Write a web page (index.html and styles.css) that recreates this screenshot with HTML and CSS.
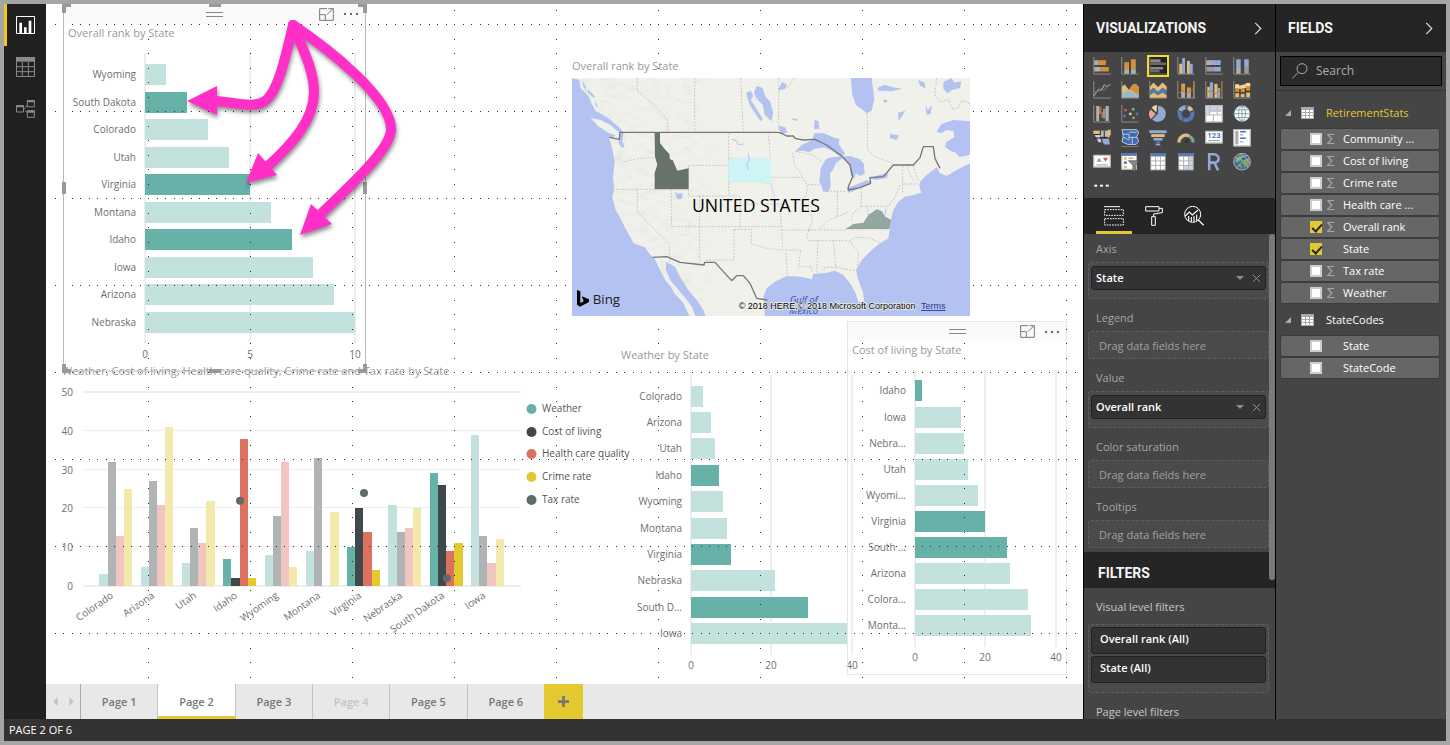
FILE: index.html
```html
<!DOCTYPE html>
<html lang="en">
<head>
<meta charset="utf-8">
<title>Retirement report</title>
<link rel="stylesheet" href="styles.css">
</head>
<body>
<div class="app">
  <div class="body">
    <nav class="rail" aria-label="Views">
      <button class="rail-btn active" aria-label="Report"><svg viewBox="0 0 57 54" width="19" height="18"><path d="M1.5 1.5h54v51h-54z" fill="none" stroke="#fff" stroke-width="3"/><path d="M10 20h8v34h-8zM24 34h8v20h-8zM38 14h8v40h-8z" fill="#fff"/></svg></button>
      <button class="rail-btn" aria-label="Data"><svg viewBox="0 0 57 60" width="19" height="20"><path d="M0 0h57v14H0z" fill="#8a8a8a"/><path d="M1.5 1.5h54v57h-54zM1.5 29h54M1.5 44h54M19 14v45M37 14v45" fill="none" stroke="#8a8a8a" stroke-width="3"/></svg></button>
      <button class="rail-btn" aria-label="Relationships"><svg viewBox="0 0 57 54" width="19" height="18"><path d="M1.500 17h21v19h-21zM34 1.500h21v19H34zM34 32h21v20H34zM23 26h4M27 22l7-6M27 32l7 6" fill="none" stroke="#8a8a8a" stroke-width="3"/><path d="M1 16h22v6H1zM33 1h22v6H33zM33 32h22v6H33z" fill="#8a8a8a"/></svg></button>
    </nav>

    <main class="workspace">
      <div class="canvas">
        <section class="visual rank selected">
          <h2 class="title">Overall rank by State</h2>
          <svg class="chart" id="rank" viewBox="64 46 302 325" width="302" height="325"></svg>
        </section>
        <section class="visual combo">
          <h2 class="title">Weather, Cost of living, Health care quality, Crime rate and Tax rate by State</h2>
          <svg class="chart" id="combo" viewBox="58 380 590 260" width="590" height="260"></svg>
        </section>
        <section class="visual weather">
          <h2 class="title">Weather by State</h2>
          <svg class="chart" id="weather" viewBox="617 370 246 306" width="246" height="306"></svg>
        </section>
        <section class="visual cost">
          <h2 class="title">Cost of living by State</h2>
          <svg class="chart" id="cost" viewBox="848 362 218 308" width="218" height="308"></svg>
        </section>
        <svg class="dots" id="dots" viewBox="46 4 1037 680" width="1037" height="680" aria-hidden="true"></svg>

        <section class="visual map">
          <h2 class="title">Overall rank by State</h2>
          <svg class="map-svg" viewBox="36 84 1194 714" width="398" height="238" role="img" aria-label="Map of the United States">
            <defs>
              <filter id="relief" x="0" y="0" width="1" height="1"><feTurbulence type="fractalNoise" baseFrequency=".03 .06" numOctaves="4" seed="4"/><feColorMatrix values="0 0 0 0 .6  0 0 0 0 .6  0 0 0 0 .56  1.600 0 0 0 -.72"/></filter>
              <linearGradient id="fade"><stop offset="0" stop-color="#fff"/><stop offset=".7" stop-color="#fff"/><stop offset="1" stop-color="#000"/></linearGradient>
              <mask id="west"><rect x="36" y="84" width="500" height="714" fill="url(#fade)"/></mask>
            </defs>
            <path d="M36 84h1194v714H36z" fill="#f1f1ec"/>
            <path d="M36 84h500v714H36z" filter="url(#relief)" mask="url(#west)" opacity=".32"/>
            <g class="states">
              <path d="M232 84v40l18 14 20 16 25 25 25 28 6 40M404 84v163M542 84l8 163M656 84v160M704 84l-20 26-28 14M922 190v108l20 20 50 20 12 8M1130 84l-6 50 18 22 24 -8 12 30 18-6 10-22 34 16M166 322l22 14 46-10 50-4M158 418h126M232 418v68l96 98 2 50M334 418v112M334 530h330M418 438v192M386 346h120M506 248v190M386 438h120M386 418v20M386 355v-9M506 395h94l34 8M506 438h34v90M540 462h128M506 325h122M624 248l8 77M634 382h92M634 403l14 60 12 12 4 54 4 64M726 382l16 22 -2 28-14 18 16 18 16 44-10 24-10 36M664 540h96M668 600h54M522 538v92h-86M522 538h52v44l50 14 44 4M678 608l4 70M722 600l-6 50h38l2 16M774 572l-4 100M820 572l8 80h-36v14M745 572h120M868 572l28 36-4 50M828 652l56 10M742 540h116M858 537h130M868 572l20-10 40 2 40 18M776 540l30-30 30-12 32-14M832 424v76M742 404h38M790 424h72M904 415v54h80l18-24M904 469l-24 20-6 22M920 470l6 26M1028 348v52M1040 350l20 40M1060 347l14 44M1030 402h48M1028 402v30M1002 448l20 -46M698 308l6 40 20 22 2 12M706 304l50 10 28 20"/>
            </g>
            <g class="water">
              <path d="M36 84l22 6 4 25 23 22 10 24 12 22 22 12 26 18 24 20 12 16-4 24-10-5 2-22-22 18-9 0 10 38 6 34-5 46 3 38-5 22 10 38 17 30 20 40 17 30 33 12 15 20 15 14 15 32 18 34 17 20 10 20 25 25 20 43H36z"/>
              <path d="M66 92l10 14 4 16-10-12zM84 118l22 22-4 4-18-16zM104 150l10 20-6 0z"/>
              <path d="M318 635l27 15 15 30 25 40 25 30 20 30 6 18h-30l-10-28-20-25-20-25-26-30-12-30z"/>
              <path d="M1230 340l-45 20-25 18-20-8-10-18-30 23-20 20-2 15 6 18-24 7-25 5-20 15-15 25-6 24-2 16-4 25-3 20-25 15-25 20-30 30-17 30 7 30 15 40 2 30-17-5-10-30-15-25-20-25-25-13-25 6-40 4-5 16-30-8-45-2-35 17-25 20-10 25 5 58h615z"/>
              <path d="M1230 214l-50-4-35 12-16 24 16 4 14-10 22 4 2 18-24 14-4 14 16 12 16 6 12 14 31-8z"/>
              <path d="M873 84h62l3 26 5 36-8 36-15 8-16-14-16-10-12-34z"/>
              <path d="M590 108l18 6 8 26 14 14 10 36-6 24-20-20-6-30-20-20-6-18zM558 128l14-6 8 16-8 12 14 20 22 36-6 8-20-28-14-24z"/>
              <path d="M704 306l20-20 32-16 8-20h28l24 10 22 8-2 14 20 30-14 8-26-18-24-10-26 4-18 10-24-4z"/>
              <path d="M790 425l-12-32 4-38 14-26 10-6 38-4 4 6-20 14-8 18-10 14 2 36-6 18zM840 320l30-2 30 10 12 14 2 30-16 6-10-8-6 16-10-10-4-36-14-12z"/>
              <path d="M860 415l26-10 34-14 14 4-20 14-48 20zM928 384l32-10 26-4-6 14-36 6zM764 210l12 4 2 24-16-2zM656 228l20 4 6 16-20 4zM692 206l20 0-2 8zM952 114l22-10 24 8 28 4-30 8-40-2zM1014 188l22-6-12 20-8 12zM1096 164l8 16 12-14-4 26-12 2zM990 252l26 4-6 14-20-6zM1074 90l20 8 2 18-16-10zM1150 96l24-12 10 14 20-4-4 20-24 6-14 10-12-14zM970 148l14 4-10 8zM344 424l10 8 14-4-2 18-14 2zM176 262l8 8 10 20-8 4-10-14zM654 120l12-24 16 8-8 14zM90 196l16-4 30 8 20 14-30-4z"/>
            </g>
            <path class="land" d="M92 204l30 6 30 16 26 22-4 10-30-10-30-20z"/>
            <path class="land" d="M1140 364l24-16 30-14 36-6v10l-40 22-24 14-20-4zM1060 428l20-4-28 12-24 4zM984 476l8 0 4 18-8-4z"/>
            <path class="stream" d="M515 268l14 4 6 12 16-2M978 476l-4 24 14 8"/>
            <path fill="#66726a" d="M284 247h16v32l12 16 16 17 2 16 8 2 14 32 34-7v63H284v-50l8-24-7-24z"/>
            <path fill="#cdf5f5" d="M506 325h122l6 20v58l-30-8h-98z"/>
            <path class="stream" d="M564 310l4 20-8 14 6 16"/>
            <path fill="#93a7a1" d="M857 537l23-15 30-4 15-23 25-17 15 5 10 17 19 10-6 27z"/>
            <g class="border">
              <path d="M148 262l30 6 2-21h475l10 3 15 8h20l5 7 25 5 35-2 35 17 45 33 25 27 8 35-13 30v10l35-7 32-13-2-17 40-3 30-35h60l20-22 10-33h30l5 35 15 30"/>
              <path d="M278 622l42-2 40 17 72 8 2-8h31l25 28 25 27 15-15h20l20 23 20 45 32 5"/>
            </g>
            <g class="map-text">
              <text x="396" y="486" class="country">UNITED STATES</text>
              <text x="690" y="758" class="gulf">Gulf of</text>
              <text x="688" y="793" class="gulf">Mexico</text>
              <text x="98" y="761" class="bing">Bing</text>
              <text x="536" y="777" class="legal">© 2018 HERE,© 2018 Microsoft Corporation</text>
            </g>
            <path d="M51 720l10 4v36l10-7-6-14 22 9v8l-27 14-9-6z"/>
            <a href="#terms"><text x="1083" y="777" class="terms">Terms</text></a>
          </svg>
        </section>

        <div class="visual-head rank-head">
          <span class="grip"></span>
          <button aria-label="Focus mode"><svg viewBox="0 0 45 39" width="15" height="13"><path d="M24 2H2v35h41V16M2 20h17v17M24 20L42 2M28 2h15v13" fill="none" stroke="#777" stroke-width="3"/></svg></button>
          <button aria-label="More options"><svg viewBox="0 0 48 12" width="16" height="4"><path d="M3 3h6v6H3zM21 3h6v6h-6zM39 3h6v6h-6z" fill="#666"/></svg></button>
        </div>
        <div class="visual-head cost-head">
          <span class="grip"></span>
          <button aria-label="Focus mode"><svg viewBox="0 0 45 39" width="15" height="13"><path d="M24 2H2v35h41V16M2 20h17v17M24 20L42 2M28 2h15v13" fill="none" stroke="#777" stroke-width="3"/></svg></button>
          <button aria-label="More options"><svg viewBox="0 0 48 12" width="16" height="4"><path d="M3 3h6v6H3zM21 3h6v6h-6zM39 3h6v6h-6z" fill="#666"/></svg></button>
        </div>

        <svg class="overlay" viewBox="46 4 420 380" width="420" height="380" aria-hidden="true">
          <path d="M63.500 4v367h302V4" fill="none" stroke="#b8b8b8"/>
          <path d="M62 4h9v3h-5v6h-4zM358 4h9v9h-4V7h-5zM209 4h12v3h-12zM62 182h4v12h-4zM363 182h4v12h-4zM62 364h4v5h5v4h-9zM363 364h4v9h-9v-4h5zM209 369h12v4h-12z" fill="#999"/>
          <g class="arrows">
            <path d="M293 25C285 60 277 95 263 102C252 108 234 102 215 101"/>
            <path d="M293 25C303 50 314 70 314 92C314 120 292 144 268 166"/>
            <path d="M293 25C330 50 391 98 391 129C391 150 346 189 320 215"/>
            <path class="head" d="M187 101l30-15v29zM246 183l12-30 19 22zM300 235l11-31 21 20z"/>
          </g>
        </svg>
      </div>

      <div class="pages">
        <div class="page-nav">
          <button aria-label="Previous page"><svg viewBox="0 0 5 10" width="5" height="9"><path d="M5 0v10L0 5z" fill="#c4c4c4"/></svg></button>
          <button aria-label="Next page"><svg viewBox="0 0 5 10" width="5" height="9"><path d="M0 0v10l5-5z" fill="#c4c4c4"/></svg></button>
        </div>
        <div class="page-list">
          <button>Page 1</button><button class="current">Page 2</button><button>Page 3</button><button class="hidden-page">Page 4</button><button>Page 5</button><button>Page 6</button>
        </div>
        <button class="add-page" aria-label="Add page"><svg viewBox="0 0 12 12" width="11" height="11"><path d="M4.500 0h3v4.500H12v3H7.500V12h-3V7.500H0v-3h4.500z" fill="#777"/></svg></button>
      </div>
    </main>

    <aside class="pane viz">
      <header class="pane-head"><h1>VISUALIZATIONS</h1><button aria-label="Collapse"><svg viewBox="0 0 8 14" width="8" height="13"><path d="M1 1l6 6-6 6" fill="none" stroke="#ddd" stroke-width="1.300"/></svg></button></header>
      <div class="viz-grid" id="viz-grid"></div>
      <div class="viz-tabs">
        <button class="on" aria-label="Fields"><svg viewBox="0 0 60 60" width="20" height="20"><path d="M0 2h48" stroke="#fff" stroke-width="3"/><path d="M2 11h56v17H2zM2 38h56v19H2z" fill="none" stroke="#fff" stroke-width="3" stroke-dasharray="5 3"/></svg></button>
        <button aria-label="Format"><svg viewBox="0 0 54 60" width="18" height="20"><path d="M2 2h40v13H2zM42 7h10v13L26 24v8M20 32h11v26H20z" fill="none" stroke="#fff" stroke-width="3"/></svg></button>
        <button aria-label="Analytics"><svg viewBox="0 0 60 60" width="20" height="20"><circle cx="26" cy="25" r="24" fill="none" stroke="#fff" stroke-width="3"/><path d="M43 42l16 16M4 30l12-12 9 9 17-15M14 30v15M22 33v15M30 31v17M38 26v18" fill="none" stroke="#fff" stroke-width="3.500"/></svg></button>
      </div>
      <div class="wells">
        <h3>Axis</h3>
        <div class="well"><div class="chip"><span>State</span><button class="caret" aria-label="Options for State"></button><button aria-label="Remove State"><svg viewBox="0 0 10 10" width="9" height="9"><path d="M1 1l8 8M9 1L1 9" stroke="#999" fill="none"/></svg></button></div></div>
        <h3>Legend</h3>
        <div class="well empty">Drag data fields here</div>
        <h3>Value</h3>
        <div class="well"><div class="chip"><span>Overall rank</span><button class="caret" aria-label="Options for Overall rank"></button><button aria-label="Remove Overall rank"><svg viewBox="0 0 10 10" width="9" height="9"><path d="M1 1l8 8M9 1L1 9" stroke="#999" fill="none"/></svg></button></div></div>
        <h3>Color saturation</h3>
        <div class="well empty">Drag data fields here</div>
        <h3>Tooltips</h3>
        <div class="well empty">Drag data fields here</div>
      </div>
      <h1 class="filters-head">FILTERS</h1>
      <div class="filters">
        <h3>Visual level filters</h3>
        <div class="well group"><button>Overall rank (All)</button><button>State (All)</button></div>
        <h3>Page level filters</h3>
      </div>
      <span class="scrollbar"></span>
    </aside>

    <aside class="pane fields">
      <header class="pane-head"><h1>FIELDS</h1><button aria-label="Collapse"><svg viewBox="0 0 8 14" width="8" height="13"><path d="M1 1l6 6-6 6" fill="none" stroke="#ddd" stroke-width="1.300"/></svg></button></header>
      <div class="search-wrap"><label class="search"><svg viewBox="0 0 48 48" width="16" height="16"><circle cx="30" cy="17" r="15" fill="none" stroke="#aaa" stroke-width="3"/><path d="M19 28L1 46" stroke="#aaa" stroke-width="3"/></svg><input type="text" placeholder="Search" aria-label="Search"></label></div>
      <div class="tree">
        <div class="table-name active"><i class="twisty"></i><svg viewBox="0 0 13 12" width="13" height="12"><path d="M0 0h13v12H0z" fill="#aaa"/><path d="M1 3h3v2H1zM5 3h3v2H5zM9 3h3v2H9zM1 6h3v2H1zM5 6h3v2H5zM9 6h3v2H9zM1 9h3v2H1zM5 9h3v2H5zM9 9h3v2H9z" fill="#fff"/></svg><span>RetirementStats</span></div>
        <label class="field"><input type="checkbox"><i>∑</i><span>Community ...</span></label>
        <label class="field"><input type="checkbox"><i>∑</i><span>Cost of living</span></label>
        <label class="field"><input type="checkbox"><i>∑</i><span>Crime rate</span></label>
        <label class="field"><input type="checkbox"><i>∑</i><span>Health care ...</span></label>
        <label class="field"><input type="checkbox" checked><i>∑</i><span>Overall rank</span></label>
        <label class="field"><input type="checkbox" checked><i></i><span>State</span></label>
        <label class="field"><input type="checkbox"><i>∑</i><span>Tax rate</span></label>
        <label class="field"><input type="checkbox"><i>∑</i><span>Weather</span></label>
        <div class="table-name"><i class="twisty"></i><svg viewBox="0 0 13 12" width="13" height="12"><path d="M0 0h13v12H0z" fill="#aaa"/><path d="M1 3h3v2H1zM5 3h3v2H5zM9 3h3v2H9zM1 6h3v2H1zM5 6h3v2H5zM9 6h3v2H9zM1 9h3v2H1zM5 9h3v2H5zM9 9h3v2H9z" fill="#fff"/></svg><span>StateCodes</span></div>
        <label class="field"><input type="checkbox"><i></i><span>State</span></label>
        <label class="field"><input type="checkbox"><i></i><span>StateCode</span></label>
      </div>
    </aside>
  </div>
  <footer class="status">PAGE 2 OF 6</footer>
</div>
<script src="charts.js"></script>
</body>
</html>
```
FILE: styles.css
```css
* { box-sizing: border-box; }
body {
  margin: 0;
  font: 11px/16px "Open Sans", "Noto Sans", sans-serif;
  color: #fff;
}
h1, h2, h3 { margin: 0; font-size: 11px; font-weight: 400; }
button { border: 0; padding: 0; background: none; font: inherit; color: inherit; cursor: pointer; }
svg { display: block; }

.app {
  display: flex;
  flex-direction: column;
  height: 100vh;
  border: 4px solid #a5a5a5;
  background: #333;
}
.body { display: flex; flex: 1; min-height: 0; }
.status { height: 22px; padding-left: 5px; line-height: 22px; background: #333; }

.rail { display: flex; flex-direction: column; width: 42px; background: #212121; }
.rail-btn { display: grid; place-items: center; width: 42px; height: 42px; }
.rail-btn.active { border-left: 3px solid #f2c811; padding-right: 3px; }

.workspace { display: flex; flex-direction: column; flex: 1; min-width: 0; background: #fff; }
.canvas { position: relative; flex: 1; min-height: 0; overflow: hidden; }
.visual { position: absolute; }
.title { line-height: 16px; color: #999; white-space: nowrap; }
.chart text { font-size: 10px; fill: #6e6e6e; }
.chart { overflow: visible; }
.rank { left: 18px; top: 21px; }
.rank .title { padding-left: 4px; margin-bottom: 5px; }
.combo { left: 12px; top: 359px; }
.combo .title { padding-left: 4px; margin-bottom: 1px; }
.weather { left: 571px; top: 343px; }
.weather .title { padding-left: 4px; margin-bottom: 7px; }
.cost { left: 801px; top: 317px; width: 220px; height: 354px; padding-top: 20px; border: 1px solid #e6e6e6; }
.cost .title { padding-left: 4px; margin-bottom: 4px; }
.map { left: 526px; top: 54px; }
.map .title { margin-bottom: 4px; }
.chart .rule { fill: #eee; }
.chart .legend { fill: #555; }
.dots { position: absolute; left: 0; top: 0; pointer-events: none; fill: #2a2a2a; }
.overlay { position: absolute; left: 0; top: 0; pointer-events: none; }
.arrows { fill: none; stroke: #ff2fc8; stroke-width: 10; stroke-linecap: round; filter: drop-shadow(1px 3px 2px rgba(0, 0, 0, .45)); }
.arrows .head { fill: #ff2fc8; stroke: none; }

.visual-head {
  position: absolute;
  display: grid;
  grid-template-columns: 1fr auto 1fr auto auto;
  align-items: center;
  height: 20px;
  background: #fafafa;
}
.visual-head .grip { grid-column: 2; width: 17px; height: 5px; margin-left: 46px; border: solid #888; border-width: 1px 0; }
.visual-head button:nth-of-type(1) { grid-column: 4; padding-right: 9px; }
.visual-head button:nth-of-type(2) { grid-column: 5; padding-right: 6px; }
.rank-head { left: 18px; top: 0; width: 301px; }
.cost-head { left: 802px; top: 318px; width: 218px; height: 19px; }

.states { fill: none; stroke: #b9b5aa; stroke-width: 2; stroke-dasharray: 6 4; }
.water { fill: #b3c2f0; }
.land { fill: #f1f1ec; }
.stream { fill: none; stroke: #b3c2f0; stroke-width: 3; }
.border { fill: none; stroke: #777; stroke-width: 4; stroke-linejoin: round; }
.map-text { fill: #000; paint-order: stroke; }
.country { font: 53px "Open Sans", "Noto Sans", sans-serif; stroke: #f1f1ec; stroke-width: 6; }
.bing { font: 40px "Open Sans", "Noto Sans", sans-serif; fill: #222; }
.gulf { font: italic 28px "Open Sans", "Noto Sans", sans-serif; fill: #3d4fae; }
.legal { font: 27px "Liberation Sans", Arial, sans-serif; stroke: #f1f1ec; stroke-width: 4; }
.terms { font: 27px "Liberation Sans", Arial, sans-serif; fill: #2b35a0; text-decoration: underline; }

.pages { display: flex; height: 35px; background: #e8e8e8; color: #777; }
.page-nav { display: flex; justify-content: center; align-items: center; gap: 11px; width: 34px; }
.page-list { display: flex; width: 464px; border-left: 1px solid #aaa; }
.page-list button { flex: 1; border-right: 1px solid #c4c4c4; font-weight: 600; }
.page-list .current { background: #fff; border-bottom: 3px solid #e3c92f; padding-top: 3px; }
.page-list .hidden-page { color: #c4c4c4; }
.page-list button:last-child { border-right: 0; }
.add-page { display: grid; place-items: center; width: 39px; background: #e3c92f; }

.pane { position: relative; border-left: 1px solid #000; background: #454545; overflow: hidden; }
.viz { width: 192px; }
.fields { width: 171px; }
.pane-head { display: flex; justify-content: space-between; align-items: center; height: 48px; padding: 0 13px 0 12px; background: #252525; }
.pane-head h1, .filters-head { font: 700 14px/20px Roboto, "Open Sans", sans-serif; color: #f4f4f4; }
.viz-grid { display: grid; grid-template-columns: repeat(6, 28px); grid-auto-rows: 24px; padding: 2px 0 0 4px; height: 146px; }
.viz-grid button { display: grid; place-items: center; }
.viz-grid .picked svg { box-sizing: content-box; border: 2px solid #f2d92f; background: #222; }
.viz-tabs { display: flex; height: 36px; padding-left: 12px; background: #252525; gap: 4px; }
.viz-tabs button { display: grid; place-items: center; width: 36px; }
.viz-tabs .on { border-bottom: 3px solid #e3c92f; padding-top: 3px; }
.viz h3 { height: 32px; padding-left: 12px; line-height: 38px; color: #a6a6a6; }
.viz .wells { padding-bottom: 4px; }
.viz .wells h3:first-child { height: 28px; line-height: 30px; }
.well { width: 181px; height: 37px; margin-left: 4px; padding: 3px 2px; border: 1px dashed #5e5e5e; border-radius: 3px; background: #4a4a4a; }
.well.empty { height: 28px; padding: 0 10px; line-height: 28px; color: #a0a0a0; }
.chip { display: flex; align-items: center; height: 24px; padding: 0 4px; border: 1px solid #222; border-radius: 3px; background: #333; font-weight: 600; }
.chip span { flex: 1; }
.chip button { margin-left: 8px; }
.chip .caret { border: solid transparent; border-width: 4px 4px 0; border-top-color: #8d8d8d; margin: 0; }
.filters-head { padding-left: 14px; height: 36px; line-height: 42px; background: #252525; }
.viz .filters h3 { height: 36px; color: #c8c8c8; }
.well.group { display: grid; gap: 2px; height: 69px; padding: 2px; align-content: start; }
.group button { height: 27px; padding: 0 8px 3px; text-align: left; border: 1px solid #222; border-radius: 3px; background: #333; font-weight: 600; }
.scrollbar { position: absolute; right: 0; top: 230px; width: 6px; height: 346px; border-radius: 3px; background: #7a7a7a; }

.search-wrap { padding: 4px; height: 39px; border-bottom: 1px solid #333; }
.search { display: flex; align-items: center; height: 30px; padding-left: 11px; gap: 8px; border: 1px solid #000; background: #2a2a2a; }
.search input { flex: 1; width: 0; padding: 0; border: 0; outline: 0; background: none; color: #fff; font: 12px/16px "Open Sans", "Noto Sans", sans-serif; }
.search input::placeholder { color: #aaa; }
.tree { padding: 6px 6px 0 4px; }
.table-name { display: flex; align-items: center; height: 31px; padding-left: 5px; }
.table-name.active { color: #e3c92f; }
.table-name svg { margin: 0 12px 0 10px; }
.twisty { border: solid transparent; border-width: 0 0 6px 6px; border-bottom-color: #aaa; }
.field { display: flex; align-items: center; height: 22px; padding-left: 29px; border: 1px solid #3c3c3c; border-radius: 3px; background: #666; white-space: nowrap; }
.field input { appearance: none; width: 12px; height: 12px; margin: 0; border: 2px solid #ccc; background: #fff; }
.field input:checked { position: relative; border: 0; background: #e3c92f; }
.field input:checked::after { content: ""; position: absolute; left: 4px; top: 1px; width: 4px; height: 8px; border: solid #222; border-width: 0 2px 2px 0; transform: rotate(42deg); }
.field i { width: 21px; padding-left: 5px; font: 11px/14px "DejaVu Sans", sans-serif; color: #aaa; }
```
FILE: charts.js
```js
const NS = 'http://www.w3.org/2000/svg';
const LIGHT = '#c4e2dd', DARK = '#67b2a8';
function add(parent, name, attrs, text) {
  const node = document.createElementNS(NS, name);
  for (const key in attrs) node.setAttribute(key, attrs[key]);
  if (text !== undefined) node.textContent = text;
  parent.appendChild(node);
  return node;
}
function bars(id, o) {
  const svg = document.getElementById(id);
  o.ticks.forEach(t => {
    const x = Math.round(o.x + t * o.unit);
    add(svg, 'rect', { x: x - 1, y: o.top, width: 2, height: o.bottom - o.top, class: 'rule' });
    add(svg, 'text', { x, y: o.bottom + 14, 'text-anchor': 'middle' }, t);
  });
  o.rows.forEach(([name, value, on], i) => {
    const y = Math.round(o.first + i * o.step);
    add(svg, 'rect', { x: o.x, y, width: Math.round(value * o.unit), height: 21, fill: on ? DARK : LIGHT });
    add(svg, 'text', { x: o.x - 9, y: y + 14, 'text-anchor': 'end' }, name);
  });
}
bars('rank', { x: 145, unit: 21, top: 53, bottom: 344, first: 64, step: 27.5, ticks: [0, 5, 10], rows: [
  ['Wyoming', 1], ['South Dakota', 2, 1], ['Colorado', 3], ['Utah', 4], ['Virginia', 5, 1],
  ['Montana', 6], ['Idaho', 7, 1], ['Iowa', 8], ['Arizona', 9], ['Nebraska', 10]] });
bars('weather', { x: 691, unit: 4.02, top: 375, bottom: 655, first: 385.5, step: 26.4, ticks: [0, 20, 40], rows: [
  ['Colorado', 3], ['Arizona', 5], ['Utah', 6], ['Idaho', 7, 1], ['Wyoming', 8],
  ['Montana', 9], ['Virginia', 10, 1], ['Nebraska', 21], ['South D...', 29, 1], ['Iowa', 39]] });
bars('cost', { x: 915, unit: 3.52, top: 370, bottom: 647, first: 380.4, step: 26.1, ticks: [0, 20, 40], rows: [
  ['Idaho', 2, 1], ['Iowa', 13], ['Nebra...', 14], ['Utah', 15], ['Wyomi...', 18],
  ['Virginia', 20, 1], ['South ...', 26, 1], ['Arizona', 27], ['Colora...', 32], ['Monta...', 33]] });

const combo = document.getElementById('combo');
for (let v = 0; v <= 50; v += 10) {
  const y = Math.round(586 - v * 3.88);
  add(combo, 'rect', { x: 83, y: y - 1, width: 438, height: v % 50 ? 1 : 2, class: 'rule' });
  add(combo, 'text', { x: 73, y: y + 4, 'text-anchor': 'end' }, v);
}
const colors = [['#c4e2dd', '#67b2a8'], ['#b0b4b4', '#3f484a'], ['#f2c6c0', '#de705f'], ['#f4e9ac', '#e3c92f']];
[['Colorado', [3, 32, 13, 25]], ['Arizona', [5, 27, 21, 41]], ['Utah', [6, 15, 11, 22]],
 ['Idaho', [7, 2, 38, 2], 22], ['Wyoming', [8, 18, 32, 5]], ['Montana', [9, 33, 0, 19]],
 ['Virginia', [10, 20, 14, 4], 24], ['Nebraska', [21, 14, 15, 20]],
 ['South Dakota', [29, 26, 9, 11], 2], ['Iowa', [39, 13, 6, 12]]].forEach(([name, values, tax], g) => {
  const x0 = 99.3 + g * 41.3;
  values.forEach((v, s) => {
    const a = Math.round(x0 + s * 8.2), b = Math.round(x0 + (s + 1) * 8.2);
    const h = Math.round(v * 3.88);
    add(combo, 'rect', { x: a, y: 586 - h, width: b - a, height: h, fill: colors[s][tax ? 1 : 0] });
  });
  const cx = Math.round(x0 + 16.8);
  if (tax) add(combo, 'circle', { cx, cy: 586 - tax * 3.88, r: 4, fill: '#5f6b6d' });
  add(combo, 'text', { x: cx - 2, y: 597, 'text-anchor': 'end', transform: `rotate(-35 ${cx - 2} 597)` }, name);
});
[['Weather', '#67b2a8'], ['Cost of living', '#3f484a'], ['Health care quality', '#de705f'],
 ['Crime rate', '#e3c92f'], ['Tax rate', '#5f6b6d']].forEach(([name, fill], i) => {
  const cy = Math.round(409 + i * 22.7);
  add(combo, 'circle', { cx: 531.5, cy, r: 5, fill });
  add(combo, 'text', { x: 542, y: cy + 3, class: 'legend' }, name);
});

const dots = document.getElementById('dots');
const dot = (x, y) => add(dots, 'rect', { x: Math.floor(x), y: Math.floor(y), width: 1, height: 1 });
for (let y = 24; y < 680; y += 87) for (let i = 0; i <= 120; i++) dot(55 + i * 8.5, y);
for (let x = 148; x < 1080; x += 102) for (let i = 0; i < 47; i++) dot(x, 10 + i * 14.5);

const r = (x, y, w, h, f) => `<path d="M${x} ${y}h${w}v${h}h${-w}z" fill="${f}"/>`;
const line = (d, c, w = 3) => `<path d="${d}" fill="none" stroke="${c}" stroke-width="${w}"/>`;
const axis = line('M1.5 0v53H54', '#8f8f8f');
const O = '#d0903f', G = '#b0b0b0', B = '#93a9d4', Y = '#e0c079', D = '#5477b5', K = '#e4a898', N = '#c96a48', T = '#7fa592', W = '#fff';
const sheet = r(0, 0, 54, 54, W) + line('M1.500 1.500h51v51h-51z', G);
const table = last => r(3, 0, 48, 54, G) + r(3, 0, 48, 9, D) +
  [12, 26, 40].map(y => r(6, y, 12, 11, W) + r(21, y, 12, 11, y === 40 ? last : W) + r(36, y, 12, 11, last)).join('');
const icons = [
  ['Stacked bar', axis + r(3, 10, 12, 15, G) + r(15, 10, 24, 15, O) + r(3, 31, 20, 14, G) + r(23, 31, 25, 14, O)],
  ['Stacked column', axis + r(9, 16, 15, 22, O) + r(9, 38, 15, 14, G) + r(30, 7, 15, 31, O) + r(30, 38, 15, 14, G)],
  ['Clustered bar', line('M1.500 0v53H54', '#777') + r(3, 7, 32, 10, '#888') + r(3, 17, 49, 8, '#6a6a6a') + r(3, 31, 40, 8, '#888') + r(3, 39, 29, 9, '#6a6a6a')],
  ['Clustered column', axis + r(6, 21, 9, 31, Y) + r(15, 3, 9, 49, B) + r(30, 12, 9, 40, Y) + r(39, 21, 9, 31, B)],
  ['100% stacked bar', axis + r(3, 10, 18, 15, G) + r(21, 10, 27, 15, B) + r(3, 31, 24, 14, '#999') + r(27, 31, 21, 14, B)],
  ['100% stacked column', axis + r(9, 7, 14, 27, B) + r(9, 34, 14, 18, G) + r(34, 7, 14, 24, B) + r(34, 31, 14, 21, '#999')],
  ['Line', axis + line('M2 46L16 26l9 4 9-18 8 6 11-8', K) + line('M2 32l12 2 9-12 12 8 8-16 10-2', D)],
  ['Area', axis + '<path d="M2 17l9-6 13 17 12-17 8-2 10 10v32H2z" fill="#e0c079"/><path d="M24 26l12-16 10-1 8 9v26L36 32z" fill="#d0903f"/><path d="M2 40l20-12 14 8 18 6v9H2z" fill="#9db9c6"/>'],
  ['Stacked area', axis + '<path d="M2 18L13 5l14 14L41 5l13 12v13L41 21 27 34 13 21 2 30z" fill="#e0c079"/><path d="M2 32l11-10 14 12 14-12 13 10v12l-13-9-14 9-14-9-11 8z" fill="#5477b5"/><path d="M2 44l11-8 14 8 14-8 13 8v8H2z" fill="#e0c079"/>'],
  ['Line and stacked column', line('M1.500 0v53H54M52 0v53', '#8f8f8f') + r(12, 8, 12, 25, '#d99a50') + r(12, 33, 12, 19, G) + r(30, 20, 12, 14, '#d99a50') + r(30, 34, 12, 18, G) + line('M3 38l14-9 12 12 20-16', N) + r(50, 0, 3, 54, O)],
  ['Line and clustered column', axis + r(6, 18, 8, 34, Y) + r(14, 4, 10, 48, B) + r(28, 9, 10, 43, Y) + r(38, 22, 8, 30, B) + line('M3 38l14-9 12 12 20-16', N) + r(50, 0, 3, 54, O)],
  ['Ribbon', axis + '<path d="M6 14h17l20-7h10v10l-12 4-18 4H6z" fill="#e8c98a"/><path d="M6 33h20l16-6h11v10H6z" fill="#5a3a2a"/>' + r(6, 10, 12, 12, '#f0dba4') + r(6, 22, 12, 12, O) + r(6, 38, 12, 12, Y) + r(23, 13, 12, 10, '#f0dba4') + r(23, 23, 12, 12, O) + r(23, 40, 12, 10, Y) + r(40, 6, 12, 10, '#f0dba4') + r(40, 16, 12, 14, O) + r(40, 36, 12, 14, Y)],
  ['Waterfall', axis + r(9, 3, 9, 47, G) + r(18, 5, 7, 24, N) + r(25, 22, 6, 18, N) + r(30, 12, 8, 30, T) + r(38, 3, 10, 47, G)],
  ['Scatter', axis + [[13, 16, N], [37, 13, T], [28, 28, Y], [10, 34, D], [49, 28, D], [38, 40, T]].map(p => `<circle cx="${p[0]}" cy="${p[1]}" r="4.500" fill="${p[2]}"/>`).join('')],
  ['Pie', '<path d="M27 27V2a25 25 0 1 1-18 43z" fill="#93a9d4"/><path d="M22 23L7 8A24 24 0 0 1 24 0z" fill="#f0dba4"/><path d="M20 28L5 44A25 25 0 0 1 4 14z" fill="#e4a898"/>'],
  ['Donut', '<circle cx="27" cy="27" r="20" fill="none" stroke="#5477b5" stroke-width="13"/><path d="M27 7a20 20 0 0 0-19 14" fill="none" stroke="#93a9d4" stroke-width="13"/><path d="M34 8a20 20 0 0 1 10 9" fill="none" stroke="#e0c079" stroke-width="13"/><path d="M27 0v14M50 18l-12 5M4 18l12 5M14 49l7-12" stroke="#454545" stroke-width="3"/>'],
  ['Treemap', sheet + r(3, 3, 10, 27, '#c8d4e6') + r(14, 3, 22, 16, '#c8d4e6') + r(38, 3, 13, 16, '#c8d4e6') + line('M14 0v31M0 31h54M37 0v31M14 19h37M25 31v21', G)],
  ['Map', '<circle cx="27" cy="27" r="26" fill="#7f9fd0"/><circle cx="27" cy="27" r="23" fill="#fff"/><ellipse cx="27" cy="27" rx="11" ry="23" fill="none" stroke="#7fa592" stroke-width="3"/>' + line('M27 3v48M3 27h48M7 15h40M7 39h40', T, 3)],
  ['Filled map', '<path d="M0 5h22v12H0z" fill="#e0c079"/><path d="M22 5h24v20H22z" fill="#bbb"/><path d="M46 2h8v14l-6 12h-6z" fill="#e0c079"/><path d="M4 18h18v10H8z" fill="#ccc"/><path d="M10 29h16v12H16z" fill="#ccc"/><path d="M28 30h20l4 18H34l-6-8z" fill="#93a9d4"/><path d="M0 17h22V5M22 26h24M34 5v20M2 28h22l3 12" stroke="#222" stroke-width="3" fill="none"/>'],
  ['Shape map', '<path d="M2 2h46l6 8-6 14 6 14-8 10H20L2 40l4-18z" fill="#3f6bab"/><path d="M2 2h46l6 8-6 14 6 14-8 10H20L2 40l4-18zM4 16h20v20M24 10h24M24 26h26M6 26l14 6M34 26v20" fill="none" stroke="#b8cdea" stroke-width="3"/>' + line('M0 55h54', '#888')],
  ['Funnel', r(0, 4, 54, 9, B) + r(6, 16, 42, 9, Y) + r(13, 28, 28, 8, B) + r(20, 39, 14, 6, D) + r(20, 46, 14, 5, B)],
  ['Gauge', '<path d="M5 42a22 22 0 0 1 32-20" fill="none" stroke="#e0c079" stroke-width="10"/><path d="M37 22a22 22 0 0 1 12 20" fill="none" stroke="#7fa592" stroke-width="10"/><path d="M22 42l14-14-6 14z" fill="#222"/>'],
  ['Card', r(0, 6, 54, 39, W) + line('M1.500 7h51v36h-51z', G) + '<text x="27" y="29" font-size="24" font-weight="700" font-family="Roboto" text-anchor="middle" fill="#5477b5">123</text>' + line('M9 36h36', T)],
  ['Multi-row card', sheet + r(6, 5, 10, 43, G) + r(21, 6, 18, 5, D) + r(21, 16, 10, 4, B) + r(21, 26, 18, 5, D) + r(21, 38, 10, 4, B)],
  ['KPI', r(0, 6, 54, 39, W) + line('M1.500 7h51v36h-51z', G) + '<path d="M10 27l8-12 8 12z" fill="#7fa592"/><path d="M30 15h16l-8 12z" fill="#c96a48"/>' + line('M9 37h36', T)],
  ['Slicer', r(0, 0, 48, 52, W) + line('M1.500 1.500h45v49h-45z', G) + r(0, 0, 48, 9, D) + r(8, 13, 9, 8, Y) + r(8, 26, 9, 8, D) + r(8, 39, 9, 8, Y) + r(22, 14, 16, 5, K) + '<path d="M22 24h32L44 38v18h-8V38z" fill="#888" stroke="#454545" stroke-width="2"/>'],
  ['Table', table(W)],
  ['Matrix', table('#c8d4e6')],
  ['R script', '<path d="M12 54V4h14c20 0 20 26 2 26H12m16 0l12 24" fill="none" stroke="#93a9d4" stroke-width="8"/>'],
  ['ArcGIS map', '<circle cx="27" cy="27" r="26" fill="#3f6bab"/><path d="M8 18l12-12 10 6-8 12-12 8zM28 30l16-12 6 12-14 16zM14 38l10-4 4 14z" fill="#6fae4c"/><circle cx="27" cy="27" r="26" fill="none" stroke="#b0b0b0" stroke-width="3"/><path d="M4 14c20 4 36 16 42 32M20 2c14 8 28 20 32 36M2 30c10-12 30-22 44-22M10 48c8-16 26-28 42-30" fill="none" stroke="#b0b0b0" stroke-width="3"/>'],
  ['Import a visual', [6, 24, 42].map(x => r(x - 3, 24, 9, 6, W)).join('')]
];
document.getElementById('viz-grid').innerHTML = icons.map(([name, art], i) =>
  `<button aria-label="${name}"${i === 2 ? ' class="picked"' : ''}><svg viewBox="0 0 54 56" width="18" height="18">${art}</svg></button>`).join('');
```
